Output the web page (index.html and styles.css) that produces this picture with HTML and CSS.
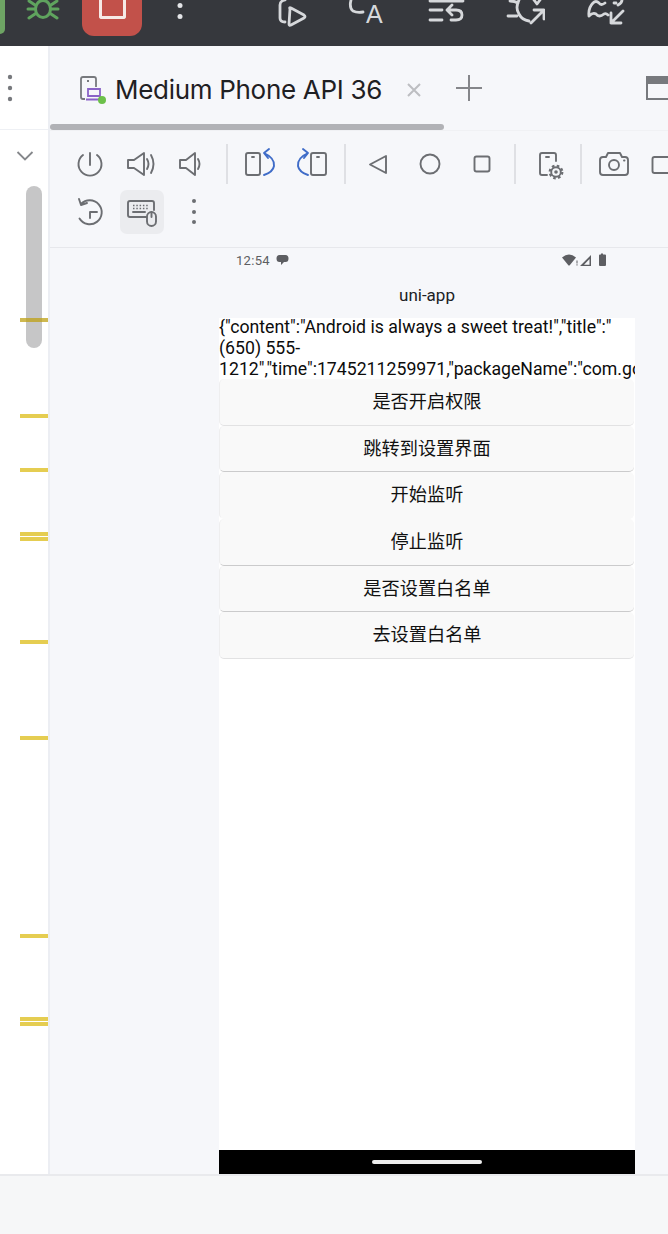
FILE: index.html
```html
<!DOCTYPE html>
<html lang="zh">
<head>
<meta charset="utf-8">
<title>Running Devices</title>
<link rel="stylesheet" href="styles.css">
</head>
<body>
<div class="app">
  <header class="topbar">
    <span class="run-pill"></span>
    <svg class="bug" viewBox="0 0 40 46"><g fill="none" stroke="#5fa35e" stroke-width="3" stroke-linecap="round"><ellipse cx="20" cy="9" rx="7.500" ry="8.500"/><path d="M6 1l6 4M5 9h7M6 18l6-4M34 1l-6 4M35 9h-7M34 18l-6-4"/></g></svg>
    <span class="stop-btn"><span class="stop-glyph"></span></span>
    <svg class="more" viewBox="0 0 8 46"><circle cx="4" cy="5.500" r="2.500" fill="#e4e5e8"/><circle cx="4" cy="16.500" r="2.500" fill="#e4e5e8"/></svg>
    <div class="top-icons">
      <svg class="top-icon first" viewBox="0 0 40 46"><path d="M15 0Q10 1 10 5V18Q10 22 15 22M20 9Q19 7 21 8L34 15Q36 16.500 34 18L21 25Q19 26 19 24Z"/></svg>
      <svg class="top-icon" viewBox="0 0 40 46"><path d="M6 0Q4 8 8 11Q12 13 18 12"/><text x="21" y="23" class="top-a">A</text></svg>
      <svg class="top-icon" viewBox="0 0 40 46"><path d="M5 1H38M5 10H17M5 20H17M23 10H31Q37 10 37 15Q37 20 31 20H26M27 5L22 10L27 15"/></svg>
      <svg class="top-icon" viewBox="0 0 40 46"><path d="M5 1Q10 1 13 3M3 16H12M14 0Q10 8 14 14Q17 20 24 21M26 23L38 11M29 10H39V19M29 0L32 4L35 0"/></svg>
      <svg class="top-icon" viewBox="0 0 40 46"><path d="M4 16Q3 8 8 3Q11 0 14 3Q16 6 20 3M4 16Q8 12 11 14Q14 18 19 14Q21 13 23 15M26 23L38 11M26 13V23H36M29 3H31M37 0Q37 3 33 5"/></svg>
    </div>
  </header>

  <div class="workspace">
    <aside class="rail">
      <div class="rail-head">
        <svg class="rail-dots" viewBox="0 0 6 30"><circle cx="3" cy="4" r="2.200"/><circle cx="3" cy="15" r="2.200"/><circle cx="3" cy="26" r="2.200"/></svg>
      </div>
      <svg class="chevron" viewBox="0 0 18 10"><path d="M1.500 1L9 8.500L16.500 1"/></svg>
      <div class="thumb"></div>
      <span class="mark m1"></span><span class="mark m2"></span><span class="mark m3"></span>
      <span class="mark m4"></span><span class="mark m5"></span><span class="mark m6"></span>
      <span class="mark m7"></span><span class="mark m8"></span><span class="mark m9"></span>
      <span class="mark m10"></span>
    </aside>

    <main class="main">
      <div class="tabs">
        <svg class="tab-icon" viewBox="0 0 28 28"><path class="tab-phone" d="M16 11V3Q16 1 14 1H3Q1 1 1 3V21Q1 23 3 23H5M7 5H9"/><path class="tab-laptop" d="M8 13H20V20H8ZM6 23.500H20"/><circle cx="22" cy="24" r="4" fill="#6cc04a"/></svg>
        <span class="tab-title">Medium Phone API 36</span>
        <svg class="tab-close" viewBox="0 0 14 14"><path d="M1 1L13 13M13 1L1 13"/></svg>
        <svg class="tab-add" viewBox="0 0 26 26"><path d="M13 0V26M0 13H26"/></svg>
        <div class="window-icon"></div>
      </div>
      <div class="tabs-scroll"></div>

      <div class="toolbar">
        <div class="tool-row">
          <svg class="tool" viewBox="0 0 52 48"><path d="M26 13V25M19 15A11.500 11.500 0 1 0 33 15"/></svg>
          <svg class="tool" viewBox="0 0 52 48"><path d="M12 20H18L28 13V35L18 28H12ZM31 19Q34 24 31 29M35 15Q40 24 35 33"/></svg>
          <svg class="tool" viewBox="0 0 52 48"><path d="M12 20H18L27 13V35L18 28H12ZM30 19Q33 24 30 29"/></svg>
          <span class="sep"></span>
          <svg class="tool" viewBox="0 0 52 48"><rect x="12" y="13" width="14" height="22" rx="2"/><path d="M18 17H20"/><path class="blue" d="M30 13Q41 18 40 26Q39 32 30 35M35 9L30 13L34 18"/></svg>
          <svg class="tool" viewBox="0 0 52 48"><rect x="25" y="13" width="15" height="22" rx="2"/><path d="M31 17H33"/><path class="blue" d="M22 13Q11 18 12 26Q13 32 22 35M17 9L22 13L18 18"/></svg>
          <span class="sep"></span>
          <svg class="tool" viewBox="0 0 52 48"><path d="M34 16V33L18 24.500Z"/></svg>
          <svg class="tool" viewBox="0 0 52 48"><circle cx="26" cy="24" r="9.500"/></svg>
          <svg class="tool" viewBox="0 0 52 48"><rect x="18.500" y="16.500" width="15" height="15" rx="2"/></svg>
          <span class="sep"></span>
          <svg class="tool" viewBox="0 0 52 48"><path d="M34 21V15Q34 13 32 13H20Q18 13 18 15V33Q18 35 20 35H25M24 17H27"/><circle cx="34" cy="32" r="4.800"/><circle class="gear-teeth" cx="34" cy="32" r="6.300"/><circle class="dot" cx="34" cy="32" r="1.800"/></svg>
          <span class="sep"></span>
          <svg class="tool" viewBox="0 0 52 48"><path d="M18 17L20 13H32L34 17H37Q40 17 40 20V32Q40 35 37 35H15Q12 35 12 32V20Q12 17 15 17Z"/><circle cx="26" cy="25" r="5"/><path d="M36 20.500H36.500"/></svg>
          <svg class="tool" viewBox="0 0 52 48"><rect x="12.500" y="17" width="40" height="16" rx="2"/></svg>
        </div>
        <div class="tool-row">
          <svg class="tool" viewBox="0 0 52 48"><path d="M17 16A12 12 0 1 1 15.500 30.500M15 11L17 17L23 15M26 30V24H33"/></svg>
          <span class="tool-slot"><svg class="tool-active" viewBox="4 2 44 44"><path d="M31 29H14Q12 29 12 27V15Q12 13 14 13H36Q38 13 38 15V22M17 24H29"/><path class="dots" d="M17 17.500H33M17 20.500H33"/><rect x="31" y="24" width="9" height="14" rx="4.500"/><path d="M35.500 24V29"/></svg></span>
          <svg class="tool" viewBox="0 0 52 48"><circle class="dot" cx="26" cy="13" r="2"/><circle class="dot" cx="26" cy="24" r="2"/><circle class="dot" cx="26" cy="34" r="2"/></svg>
        </div>
      </div>

      <div class="stage">
        <div class="phone">
          <div class="status">
            <span class="clock">12:54</span>
            <svg class="status-msg" viewBox="0 0 13 12"><path d="M3.500 1H9.500Q12.500 1 12.500 4.500Q12.500 8 9.500 8H8L5 11V8H3.500Q.5 8 .5 4.500Q.5 1 3.500 1Z"/></svg>
            <svg class="status-right" viewBox="0 0 46 14"><path d="M0 4.500Q7 -1.500 14 4.500L7.500 12.500H6.500Z"/><path d="M14.500 7.500H15.500V10.500H14.500ZM14.500 11.300H15.500V12.500H14.500Z"/><path d="M29 2V13H18ZM27.500 6L22 11.800H27.500Z" fill-rule="evenodd"/><path d="M37 2.500Q37 1.500 38 1.500H39V.5H41V1.500H43Q44 1.500 44 2.500V12Q44 13 43 13H38Q37 13 37 12Z"/></svg>
          </div>
          <div class="appbar">uni-app</div>
          <div class="screen">
            <p class="payload">{"content":"Android is always a sweet treat!","title":"(650) 555-1212","time":1745211259971,"packageName":"com.google.android.apps.messaging"}</p>
            <div class="btn line-faint">是否开启权限</div>
            <div class="btn line-dark">跳转到设置界面</div>
            <div class="btn line-none">开始监听</div>
            <div class="btn line-dark">停止监听</div>
            <div class="btn line-dark">是否设置白名单</div>
            <div class="btn line-faint">去设置白名单</div>
          </div>
          <div class="navbar"><span class="nav-pill"></span></div>
        </div>
      </div>
    </main>
  </div>

  <footer class="statusbar"></footer>
</div>
</body>
</html>
```
FILE: styles.css
```css
* { box-sizing: border-box; }
html, body { margin: 0; padding: 0; }
body { width: 668px; height: 1234px; overflow: hidden; background: #f6f7f8; font-family: Roboto, "Noto Sans CJK SC", sans-serif; }
.app { display: flex; flex-direction: column; height: 1234px; overflow: hidden; }

/* top bar */
.topbar { flex: none; height: 46px; background: #36383d; display: flex; align-items: flex-start; }
.run-pill { width: 5px; height: 34px; background: #6ea464; border-radius: 0 0 5px 0; flex: none; }
.bug { width: 40px; height: 46px; margin-left: 18px; flex: none; }
.stop-btn { width: 60px; height: 36px; margin-left: 19px; background: #c2514a; border-radius: 0 0 12px 12px; display: flex; justify-content: center; flex: none; }
.stop-glyph { width: 27px; height: 19px; border: 3px solid #f6e9e6; border-top: 0; border-radius: 0 0 3px 3px; }
.more { width: 8px; height: 46px; margin-left: 34px; flex: none; }
.top-icons { display: flex; gap: 40px; margin-left: 86px; flex: none; }
.top-icon { width: 40px; height: 46px; flex: none; fill: none; stroke: #d6d8db; stroke-width: 2.800; stroke-linecap: round; stroke-linejoin: round; }
.top-icon.first { margin-right: -5px; }
.top-a { font-family: "Liberation Sans", sans-serif; font-size: 25px; fill: #d6d8db; stroke: none; }

/* workspace */
.workspace { flex: 1; display: flex; min-height: 0; }
.rail { position: relative; flex: none; width: 50px; background: #fff; border-right: 2px solid #eceef3; }
.rail-head { height: 84px; border-bottom: 1px solid #eef0f4; padding: 27px 0 0 7px; }
.rail-dots { display: block; width: 6px; height: 30px; fill: #77797d; }
.chevron { display: block; width: 18px; height: 10px; margin: 21px 0 0 16px; fill: none; stroke: #85878b; stroke-width: 1.800; }
.thumb { width: 16px; height: 162px; margin: 25px 0 0 26px; background: #c6c6c7; border-radius: 8px; }
.mark { position: absolute; left: 20px; width: 28px; height: 4px; background: rgba(224, 196, 50, .85); }
.m1 { top: 272px; background: rgba(190, 160, 20, .75); }
.m2 { top: 368px; }
.m3 { top: 422px; }
.m4 { top: 486px; }
.m5 { top: 490.500px; }
.m6 { top: 594px; }
.m7 { top: 690px; }
.m8 { top: 888px; }
.m9 { top: 971px; }
.m10 { top: 975.500px; }

.main { flex: 1; min-width: 0; display: flex; flex-direction: column; background: #f6f7fa; overflow: hidden; }
.tabs { flex: none; height: 78px; display: flex; align-items: flex-start; padding: 30px 0 0 30px; }
.tab-icon { width: 28px; height: 28px; flex: none; fill: none; stroke-width: 1.800; }
.tab-phone { stroke: #77797d; }
.tab-laptop { stroke: #8a63c7; }
.tab-title { flex: none; margin: -2px 0 0 7px; width: 267px; font: 26px/32px Inter, "Liberation Sans", sans-serif; letter-spacing: -.3px; color: #1f2023; white-space: nowrap; }
.tab-close { flex: none; width: 14px; height: 14px; margin: 7px 0 0 25px; fill: none; stroke: #bdbec1; stroke-width: 2; }
.tab-add { flex: none; width: 26px; height: 26px; margin: -1px 0 0 35px; fill: none; stroke: #85868a; stroke-width: 2; }
.window-icon { flex: none; width: 26px; height: 24px; margin-left: 164px; border: 2px solid #77797d; border-top-width: 8px; }
.tabs-scroll { flex: none; width: 394px; height: 6px; background: #b1b2b6; border-radius: 3px; }

/* device toolbar */
.toolbar { flex: none; height: 118px; padding: 9px 0 0 14px; border-top: 1px solid #f0f1f4; border-bottom: 1px solid #e7e8ec; }
.tool-row { display: flex; align-items: center; height: 48px; }
.tool { flex: none; width: 52px; height: 48px; fill: none; stroke: #6c6e72; stroke-width: 1.900; stroke-linecap: round; stroke-linejoin: round; overflow: visible; }
.tool .blue { stroke: #3f6cc8; }
.tool .dot { fill: #6c6e72; stroke: none; }
.tool .gear-teeth { stroke-width: 2.200; stroke-dasharray: 2.600 2.350; stroke-linecap: butt; }
.sep { flex: none; width: 2px; height: 40px; margin: 0 6px; background: #dfe0e4; }
.tool-slot { flex: none; width: 52px; height: 48px; display: flex; align-items: center; justify-content: center; }
.tool-active { width: 44px; height: 44px; background: #ebecef; border-radius: 7px; fill: none; stroke: #6c6e72; stroke-width: 1.900; stroke-linecap: round; stroke-linejoin: round; }
.tool-active rect { fill: #ebecef; }
.tool-active .dots { stroke-width: 1.500; stroke-dasharray: 1.500 1.800; stroke-linecap: butt; }

/* stage and emulated phone */
.stage { flex: 1; min-height: 0; padding-left: 169px; }
.phone { width: 416px; height: 926px; display: flex; flex-direction: column; }
.status { flex: none; height: 24px; display: flex; align-items: center; padding-left: 17px; }
.clock { font-size: 13px; color: #5d5e62; letter-spacing: .3px; width: 37px; }
.status-msg { width: 13px; height: 12px; margin-left: 3px; fill: #5d5e62; }
.status-right { width: 46px; height: 14px; margin-left: 273px; fill: #5d5e62; }
.appbar { flex: none; height: 46px; padding-top: 12px; text-align: center; font-size: 17px; line-height: 22px; color: #202124; }
.screen { flex: 1; min-height: 0; background: #fff; overflow: hidden; }
.payload { margin: -1px 0 0; height: 62px; overflow: hidden; font-size: 17.700px; line-height: 21px; color: #0c0c0c; }
.btn { height: 46.670px; background: #f9f9f9; border-radius: 5px; margin-right: 1px; text-align: center; font-size: 18.200px; line-height: 43.500px; color: #111; border-bottom: 1px solid transparent; border-left: 1px solid #eeeeef; font-family: "Noto Sans CJK SC", sans-serif; }
.line-faint { border-bottom-color: #e2e2e3; }
.line-dark { border-bottom-color: #cbcbcc; }
.line-none { border-bottom-color: #f9f9f9; }
.navbar { flex: none; height: 24px; background: #000; display: flex; justify-content: center; padding-top: 10px; }
.nav-pill { width: 110px; height: 3.500px; background: #eee; border-radius: 2px; }

.statusbar { flex: none; height: 60px; background: #f6f7f8; border-top: 2px solid #e9eaed; }
```
